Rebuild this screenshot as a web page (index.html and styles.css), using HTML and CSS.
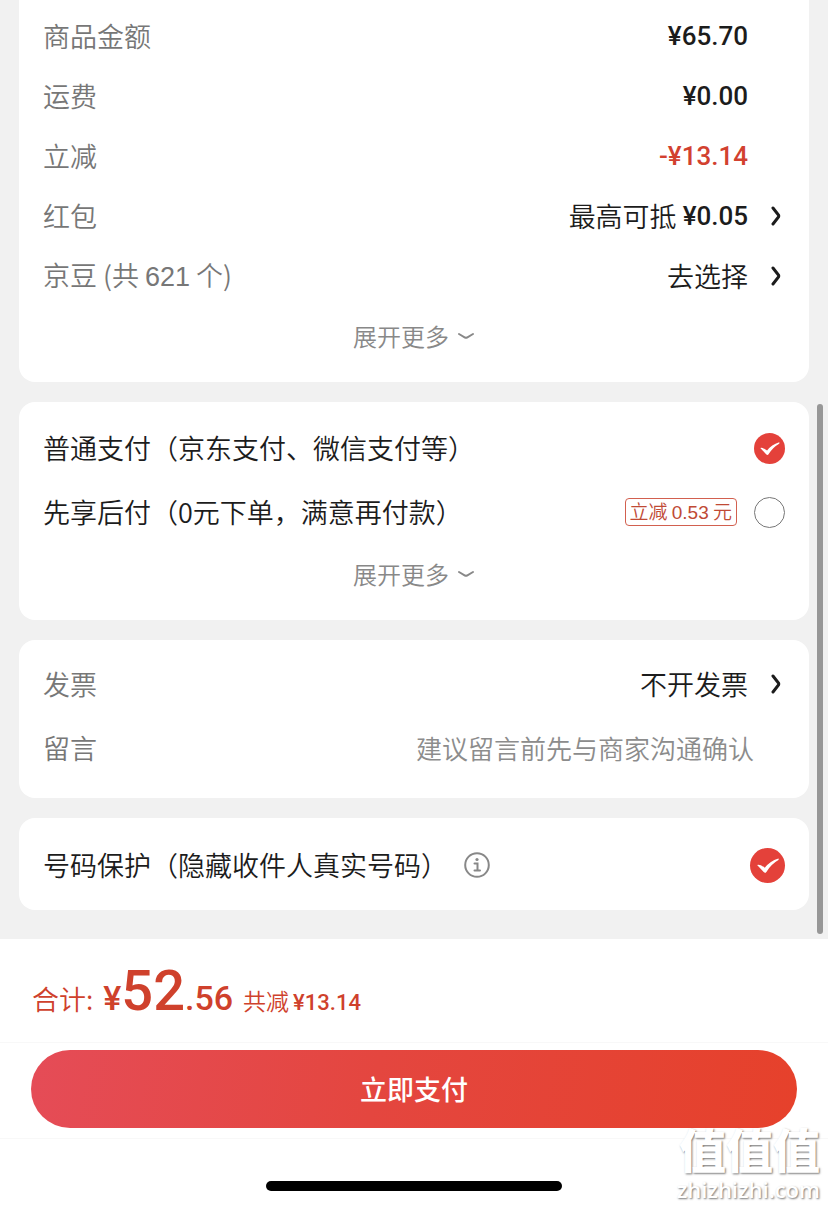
FILE: index.html
```html
<!DOCTYPE html>
<html lang="zh-CN">
<head>
    <meta charset="UTF-8">
    <meta name="viewport" content="width=device-width, initial-scale=1.0">
    <title>确认订单</title>
    <link rel="stylesheet" href="styles.css">
</head>
<body>

    <main class="content">
        <!-- 金额明细 -->
        <section class="card card-amount">
            <div class="row">
                <span class="name">商品金额</span>
                <span class="value price">¥65.70</span>
            </div>
            <div class="row">
                <span class="name">运费</span>
                <span class="value price">¥0.00</span>
            </div>
            <div class="row">
                <span class="name">立减</span>
                <span class="value price red">-¥13.14</span>
            </div>
            <div class="row">
                <span class="name">红包</span>
                <button class="link" type="button">
                    <span>最高可抵</span><span class="price">¥0.05</span>
                    <svg class="arrow" viewBox="0 0 10 20"><path d="M2 2 L7.5 9 Q8 10 7.5 11 L2 18"/></svg>
                </button>
            </div>
            <div class="row">
                <span class="name">京豆 (共 <span class="num">621</span> 个)</span>
                <button class="link" type="button">
                    <span>去选择</span>
                    <svg class="arrow" viewBox="0 0 10 20"><path d="M2 2 L7.5 9 Q8 10 7.5 11 L2 18"/></svg>
                </button>
            </div>
            <button class="more" type="button">
                展开更多
                <svg viewBox="0 0 18 8"><path d="M2 2 L8 5.500 Q9 6 10 5.500 L16 2"/></svg>
            </button>
        </section>

        <!-- 支付方式 -->
        <section class="card card-pay">
            <div class="row">
                <label for="payNormal">普通支付（京东支付、微信支付等）</label>
                <span class="check">
                    <input type="radio" id="payNormal" name="pay" checked>
                    <svg viewBox="0 0 32 32"><path d="M6.5 15.5 Q9 14.6 13.5 18 Q18 12 26 9.5 Q26.500 10 26 11 Q19 15 15 22 Q14 23.500 12.500 22 Z"/></svg>
                </span>
            </div>
            <div class="row">
                <label for="payLater">先享后付（0元下单，满意再付款）</label>
                <span class="tag">立减 <span class="num">0.53</span> 元</span>
                <span class="check">
                    <input type="radio" id="payLater" name="pay">
                    <svg viewBox="0 0 32 32"><path d="M6.5 15.5 Q9 14.6 13.5 18 Q18 12 26 9.5 Q26.500 10 26 11 Q19 15 15 22 Q14 23.500 12.500 22 Z"/></svg>
                </span>
            </div>
            <button class="more" type="button">
                展开更多
                <svg viewBox="0 0 18 8"><path d="M2 2 L8 5.500 Q9 6 10 5.500 L16 2"/></svg>
            </button>
        </section>

        <!-- 发票和留言 -->
        <section class="card card-note">
            <div class="row">
                <span class="name">发票</span>
                <button class="link" type="button">
                    <span>不开发票</span>
                    <svg class="arrow" viewBox="0 0 10 20"><path d="M2 2 L7.5 9 Q8 10 7.5 11 L2 18"/></svg>
                </button>
            </div>
            <div class="row">
                <label class="name" for="message">留言</label>
                <input class="message" type="text" id="message" placeholder="建议留言前先与商家沟通确认">
            </div>
        </section>

        <!-- 号码保护 -->
        <section class="card card-protect">
            <div class="row">
                <label for="protect">号码保护（隐藏收件人真实号码）</label>
                <button class="info" type="button" aria-label="说明">
                    <svg viewBox="0 0 26 26">
                        <circle cx="13" cy="13" r="11.800"/>
                        <path d="M10.500 11.500 H13.500 V18 M10.500 18.500 H16"/>
                        <circle class="dot" cx="13" cy="7.500" r="1.600"/>
                    </svg>
                </button>
                <span class="check check-large">
                    <input type="checkbox" id="protect" checked>
                    <svg viewBox="0 0 32 32"><path d="M6.5 15.5 Q9 14.6 13.5 18 Q18 12 26 9.5 Q26.500 10 26 11 Q19 15 15 22 Q14 23.500 12.500 22 Z"/></svg>
                </span>
            </div>
        </section>

        <div class="scrollbar"></div>
    </main>

    <footer class="footer">
        <div class="total">
            <span class="total-label">合计:</span>
            <span class="total-price"><span>¥</span><span class="big">52</span><span>.56</span></span>
            <span class="saved">共减</span>
            <span class="saved-price">¥13.14</span>
        </div>
        <div class="submit">
            <button class="pay-button" type="button">立即支付</button>
        </div>
        <div class="home-bar"></div>
        <div class="watermark">
            <span class="watermark-name">值值值</span>
            <span class="watermark-site">zhizhizhi.com</span>
        </div>
    </footer>

</body>
</html>
```

FILE: styles.css
```css
* {
    box-sizing: border-box;
}
body {
    display: flex;
    flex-direction: column;
    min-height: 100vh;
    margin: 0;
    font-family: "Noto Sans CJK SC", sans-serif;
    font-size: 27px;
    line-height: 38px;
    font-weight: 350;
    color: #1c1c1c;
    background-color: #fff;
}
button,
input {
    margin: 0;
    padding: 0;
    border: none;
    background: none;
    font: inherit;
    color: inherit;
}
button {
    cursor: pointer;
}
svg {
    display: block;
    fill: none;
    stroke: currentColor;
    stroke-linecap: round;
}
.content {
    position: relative;
    display: flex;
    flex-direction: column;
    gap: 20px;
    padding: 0 19px 29px;
    background-color: #f1f1f1;
}

/* 卡片 */
.card {
    padding: 0 24px;
    background-color: #fff;
    border-radius: 16px;
}
.card-amount {
    padding-top: 6px;
    padding-bottom: 16px;
    border-radius: 0 0 16px 16px;
}
.card-pay {
    padding-top: 14px;
    padding-bottom: 16px;
}
.card-note {
    padding-top: 12px;
    padding-bottom: 18px;
}
.card-protect {
    padding-top: 15px;
    padding-bottom: 13px;
}
.row {
    display: flex;
    align-items: center;
    min-height: 64px;
}
.card-amount .row {
    min-height: 60px;
}
.name {
    color: #777;
}
.value {
    margin-left: auto;
    margin-right: 37px;
}
.price {
    font-family: Roboto, sans-serif;
    font-size: 26px;
    font-weight: 500;
}
.num {
    font-family: "Liberation Sans", sans-serif;
}
.red {
    color: #d2412f;
}
.link {
    display: flex;
    align-items: center;
    gap: 6px;
    margin-left: auto;
}
.arrow {
    width: 10px;
    height: 20px;
    margin-left: 17px;
    margin-right: 4px;
    stroke-width: 3;
}
.more {
    display: flex;
    align-items: center;
    justify-content: center;
    gap: 8px;
    width: 100%;
    height: 60px;
    font-size: 24px;
    color: #888;
}
.more svg {
    width: 18px;
    height: 8px;
    stroke-width: 2;
}

/* 单选和勾选 */
.check {
    display: grid;
    width: 31px;
    height: 31px;
    margin-left: auto;
}
.check-large {
    width: 35px;
    height: 35px;
}
.check input,
.check svg {
    grid-area: 1 / 1;
    width: 100%;
    height: 100%;
}
.check input {
    appearance: none;
    border: 1px solid #777;
    border-radius: 50%;
}
.check input:checked {
    border: none;
    background-color: #e4413a;
}
.check svg {
    display: none;
    fill: #fff;
    stroke: none;
    pointer-events: none;
}
.check input:checked + svg {
    display: block;
}
.tag {
    margin-left: auto;
    padding: 0 4px;
    border: 1px solid #d2604f;
    border-radius: 4px;
    font-size: 19px;
    line-height: 24px;
    color: #c04a35;
}
.tag + .check {
    margin-left: 17px;
}
.message {
    flex: 1;
    min-width: 0;
    margin-right: 31px;
    font-size: 26px;
    text-align: right;
}
.message::placeholder {
    color: #8c8c8c;
    opacity: 1;
}
.info {
    margin-left: 16px;
    color: #888;
}
.info svg {
    width: 26px;
    height: 26px;
    stroke-width: 2;
}
.info .dot {
    fill: currentColor;
    stroke: none;
}
.scrollbar {
    position: absolute;
    top: 404px;
    right: 5px;
    bottom: 5px;
    width: 6px;
    border-radius: 3px;
    background-color: #979797;
}

/* 底部结算栏 */
.footer {
    position: relative;
    flex: 1;
    display: flex;
    flex-direction: column;
}
.total {
    display: flex;
    align-items: baseline;
    height: 103px;
    padding: 17px 32px 0;
    color: #cf412c;
}
.total-price {
    margin-left: 10px;
    font-family: Roboto, sans-serif;
    font-size: 34px;
    line-height: 70px;
    font-weight: 500;
}
.total-price .big {
    font-size: 56px;
}
.saved {
    margin-left: 10px;
    font-size: 23px;
}
.saved-price {
    margin-left: 4px;
    font-family: Roboto, sans-serif;
    font-size: 22px;
    font-weight: 500;
}
.submit {
    padding: 7px 31px 10px;
    border-top: 1px solid #f8f8f8;
    border-bottom: 1px solid #f8f8f8;
}
.pay-button {
    display: block;
    width: 100%;
    height: 78px;
    border-radius: 39px;
    background: linear-gradient(100deg, #e54c57, #e4463f 45%, #e6412b);
    font-weight: 500;
    color: #fff;
}
.home-bar {
    width: 296px;
    height: 10px;
    margin: 42px auto 15px;
    border-radius: 5px;
    background-color: #000;
}
.watermark {
    position: absolute;
    right: 8px;
    bottom: 4px;
    display: flex;
    flex-direction: column;
    align-items: flex-end;
    color: #fff;
    text-shadow: 1px 1px 2px #777;
}
.watermark-name {
    font-size: 47px;
    line-height: 56px;
    font-weight: 900;
}
.watermark-site {
    font-family: "Open Sans", sans-serif;
    font-size: 22px;
    line-height: 26px;
    font-weight: 600;
}
```
